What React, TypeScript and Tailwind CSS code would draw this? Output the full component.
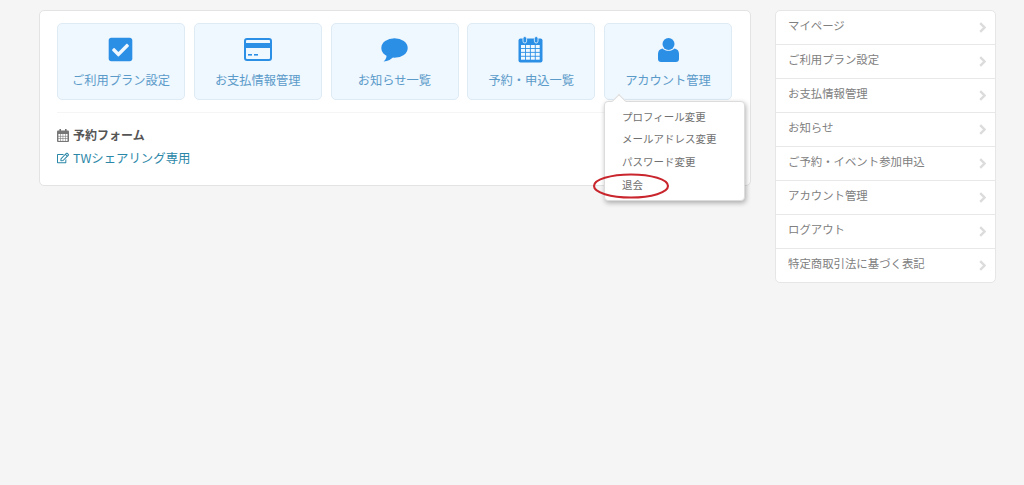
import type { ReactNode } from "react";
import { FaCheckSquare, FaRegEdit } from "react-icons/fa";

function CardIcon() {
  return (
    <svg width="28" height="23" viewBox="0 0 28 23" className="text-[#2b8fe6]">
      <rect x="1" y="1" width="26" height="21" rx="2" fill="none" stroke="currentColor" strokeWidth="2" />
      <rect x="1" y="5" width="26" height="5" fill="currentColor" />
      <rect x="4" y="16" width="4" height="1.6" fill="currentColor" />
      <rect x="10" y="16" width="4" height="1.6" fill="currentColor" />
    </svg>
  );
}

function CommentIcon() {
  return (
    <svg width="27" height="24" viewBox="0 0 27 24" className="text-[#2b8fe6]">
      <ellipse cx="13.5" cy="10" rx="13.2" ry="9.8" fill="currentColor" />
      <path d="M5.5 15 C6 19 5 21.5 2.5 23.6 C7 23.2 10.5 21.5 13 18 Z" fill="currentColor" />
    </svg>
  );
}

function UserIcon() {
  return (
    <svg width="21" height="24" viewBox="0 0 21 24" className="text-[#2b8fe6]">
      <circle cx="10.5" cy="6" r="6" fill="currentColor" />
      <path d="M4.5 10.5 C7.5 13.6 13.5 13.6 16.5 10.5 C19.5 11 21 13 21 16 L21 21 C21 22.8 19.8 24 18 24 L3 24 C1.2 24 0 22.8 0 21 L0 16 C0 13 1.5 11 4.5 10.5 Z" fill="currentColor" />
    </svg>
  );
}

function CalendarIcon() {
  const cells = [];
  for (let r = 0; r < 4; r++) {
    for (let c = 0; c < 4; c++) {
      cells.push(<rect key={`${r}-${c}`} x={3 + c * 4.9} y={9 + r * 3.9} width="4" height="3" fill="#eff7ff" />);
    }
  }
  return (
    <svg width="25" height="27" viewBox="0 0 25 27" className="text-[#2b8fe6] -ml-[1px]">
      <rect x="0.5" y="2.5" width="24" height="24" rx="2" fill="currentColor" />
      <rect x="5" y="0.5" width="3.6" height="6.5" rx="1.8" fill="currentColor" stroke="#eff7ff" strokeWidth="0.8" />
      <rect x="16.4" y="0.5" width="3.6" height="6.5" rx="1.8" fill="currentColor" stroke="#eff7ff" strokeWidth="0.8" />
      {cells}
    </svg>
  );
}

function SmallCalendar() {
  const cells = [];
  for (let r = 0; r < 3; r++) {
    for (let c = 0; c < 4; c++) {
      cells.push(<rect key={`${r}-${c}`} x={1.4 + c * 2.4} y={5 + r * 2.5} width="1.9" height="1.9" fill="#fff" />);
    }
  }
  return (
    <svg width="12" height="13" viewBox="0 0 12 13" className="text-[#777]">
      <rect x="0" y="1.5" width="12" height="11.5" rx="1" fill="currentColor" />
      <rect x="2.4" y="0" width="1.6" height="3" fill="currentColor" />
      <rect x="8" y="0" width="1.6" height="3" fill="currentColor" />
      {cells}
    </svg>
  );
}

function Chevron() {
  return (
    <svg width="7" height="11" viewBox="0 0 7 11" className="text-[#dcdcdc]">
      <path d="M1.2 1.2 L5.5 5.5 L1.2 9.8" fill="none" stroke="currentColor" strokeWidth="2.4" />
    </svg>
  );
}

function Tile({ icon, label, children }: { icon: ReactNode; label: string; children?: ReactNode }) {
  return (
    <div className="relative w-[128px] h-[77px] rounded-[5px] border border-[#deebf5] bg-[#eff7ff] flex flex-col items-center">
      <div className="h-[27px] mt-[12px] flex items-center justify-center text-[#2b8fe6]">{icon}</div>
      <span className="mt-[7px] text-[12.25px] leading-[20px] text-[#5b9bc9]">{label}</span>
      {children}
    </div>
  );
}

const menuItems = ["プロフィール変更", "メールアドレス変更", "パスワード変更", "退会"];

function AccountMenu() {
  return (
    <div className="absolute -left-px top-[77px] w-[141px] h-[100px] rounded-[4px] border border-[#dcdcdc] bg-white shadow-[1px_2px_5px_rgba(0,0,0,0.3)] pt-[3.5px] pl-[17px] z-10">
      <div className="absolute left-[9px] -top-[6px] w-[10px] h-[10px] rotate-45 bg-white border-l border-t border-[#dcdcdc]" />
      {menuItems.map((item) => (
        <div key={item} className="h-[22.7px] text-[10.5px] leading-[22px] text-[#707070]">
          {item}
        </div>
      ))}
      {/* red marker drawn over the last entry */}
      <svg width="78" height="28" viewBox="0 0 78 28" className="absolute -left-[13px] top-[70px]">
        <ellipse cx="39" cy="14" rx="37" ry="11.5" fill="none" stroke="#c9252d" strokeWidth="2.1" />
      </svg>
    </div>
  );
}

const sideItems = [
  "マイページ",
  "ご利用プラン設定",
  "お支払情報管理",
  "お知らせ",
  "ご予約・イベント参加申込",
  "アカウント管理",
  "ログアウト",
  "特定商取引法に基づく表記",
];

export default function App() {
  return (
    <div className="min-h-[485px] bg-[#f5f5f5] flex items-start gap-[24px] pl-[39px] pt-[10px] font-['Noto_Sans_CJK_JP','Liberation_Sans',sans-serif]">
      <main className="w-[712px] h-[176px] rounded-[5px] border border-[#e3e3e3] bg-white px-[17px] pt-[12px]">
        <div className="flex gap-[8.75px] pb-[12px] border-b border-[#f5f5f5]">
          <Tile icon={<FaCheckSquare className="w-[27px] h-[27px] -ml-[1px]" />} label="ご利用プラン設定" />
          <Tile icon={<CardIcon />} label="お支払情報管理" />
          <Tile icon={<CommentIcon />} label="お知らせ一覧" />
          <Tile icon={<CalendarIcon />} label="予約・申込一覧" />
          <Tile icon={<UserIcon />} label="アカウント管理">
            <AccountMenu />
          </Tile>
        </div>
        <div className="mt-[12px] flex items-center gap-[4px] text-[12px] leading-[20px] font-bold text-[#555]">
          <SmallCalendar />
          <span>予約フォーム</span>
        </div>
        <div className="mt-[3px] flex items-center gap-[4px] text-[12.4px] leading-[20px] text-[#2b87a8]">
          <FaRegEdit className="w-[12px] h-[12px]" />
          <span>TWシェアリング専用</span>
        </div>
      </main>
      <aside className="w-[221px] rounded-[5px] border border-[#e6e6e6] bg-white">
        {sideItems.map((item, i) => (
          <div
            key={item}
            className={`pl-[12px] pr-[9px] flex items-center justify-between text-[11.4px] text-[#808080] ${
              i < sideItems.length - 1 ? "h-[34px] border-b border-[#e8e8e8]" : "h-[33px]"
            }`}
          >
            <span className="-mt-[3px]">{item}</span>
            <Chevron />
          </div>
        ))}
      </aside>
    </div>
  );
}
